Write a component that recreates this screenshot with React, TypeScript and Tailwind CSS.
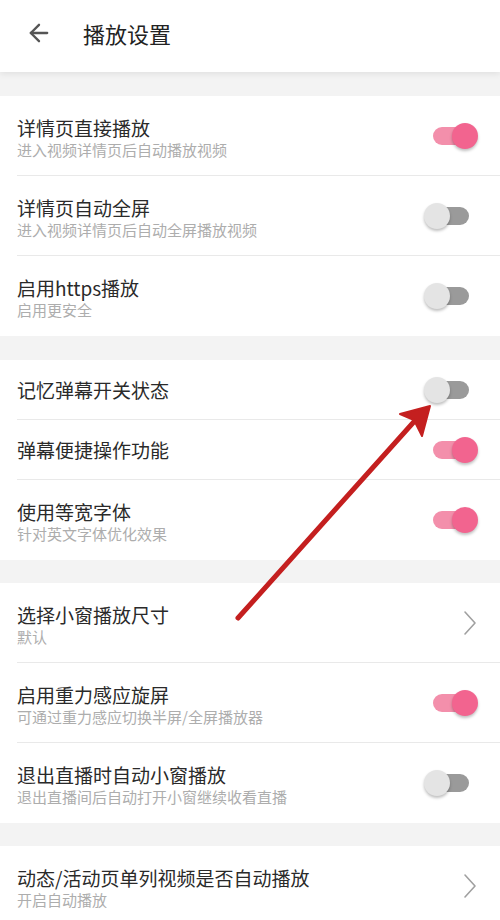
import React, { useState } from 'react';
import { ArrowLeft } from 'lucide-react';

type Item = {
  title: string;
  sub?: string;
  kind: 'toggle' | 'link';
  on?: boolean;
};

const SECTIONS: { gap: string; items: Item[] }[] = [
  {
    gap: 'h-[24px]',
    items: [
      { title: '详情页直接播放', sub: '进入视频详情页后自动播放视频', kind: 'toggle', on: true },
      { title: '详情页自动全屏', sub: '进入视频详情页后自动全屏播放视频', kind: 'toggle', on: false },
      { title: '启用https播放', sub: '启用更安全', kind: 'toggle', on: false },
    ],
  },
  {
    gap: 'h-[24px]',
    items: [
      { title: '记忆弹幕开关状态', kind: 'toggle', on: false },
      { title: '弹幕便捷操作功能', kind: 'toggle', on: true },
      { title: '使用等宽字体', sub: '针对英文字体优化效果', kind: 'toggle', on: true },
    ],
  },
  {
    gap: 'h-[23px]',
    items: [
      { title: '选择小窗播放尺寸', sub: '默认', kind: 'link' },
      { title: '启用重力感应旋屏', sub: '可通过重力感应切换半屏/全屏播放器', kind: 'toggle', on: true },
      { title: '退出直播时自动小窗播放', sub: '退出直播间后自动打开小窗继续收看直播', kind: 'toggle', on: false },
    ],
  },
  {
    gap: 'h-[23px]',
    items: [{ title: '动态/活动页单列视频是否自动播放', sub: '开启自动播放', kind: 'link' }],
  },
];

const Toggle: React.FC<{ on: boolean; onClick: () => void }> = ({ on, onClick }) => (
  <button onClick={onClick} className="relative w-[54px] h-[28px] shrink-0">
    <span
      className={`absolute left-[9px] top-[5px] w-[36px] h-[18px] rounded-full ${on ? 'bg-[#f38fab]' : 'bg-[#9a9a9a]'}`}
    />
    <span
      className={`absolute top-[1px] w-[26px] h-[26px] rounded-full shadow-[0_2px_3px_rgba(0,0,0,0.25)] ${
        on ? 'right-0 bg-[#f2648f]' : 'left-0 bg-[#e4e4e4]'
      }`}
    />
  </button>
);

const Chevron = () => (
  <svg width="14" height="26" viewBox="0 0 14 26" className="shrink-0 mr-[1px]">
    <polyline points="2,2 12,13 2,24" fill="none" stroke="#a0a0a0" strokeWidth="1.6" strokeLinecap="round" strokeLinejoin="round" />
  </svg>
);

const Row: React.FC<{ item: Item; last: boolean }> = ({ item, last }) => {
  const [on, setOn] = useState(!!item.on);
  return (
    <div className="relative flex items-center bg-white pl-[17px] pr-[22px]">
      <div className={`flex-1 flex flex-col ${item.sub ? 'pt-[20px] pb-[16px]' : 'py-[18px]'}`}>
        <span className="text-[19px] leading-[24px] text-[#2a2a2a]">{item.title}</span>
        {item.sub && <span className="text-[15px] leading-[20px] text-[#adadad]">{item.sub}</span>}
      </div>
      {item.kind === 'toggle' ? <Toggle on={on} onClick={() => setOn(!on)} /> : <Chevron />}
      {!last && <div className="absolute left-[17px] right-0 bottom-0 h-px bg-[#e9e9e9]" />}
    </div>
  );
};

export default function App() {
  return (
    <div
      className="relative w-[500px] h-[920px] overflow-hidden bg-[#f3f3f3]"
      style={{ fontFamily: '"Noto Sans CJK SC", "Noto Sans", sans-serif' }}
    >
      <header className="relative z-10 h-[72px] bg-white flex items-center pb-[6px] shadow-[0_2px_6px_rgba(0,0,0,0.08)]">
        <ArrowLeft className="ml-[25px] w-[28px] h-[28px] text-[#555]" strokeWidth={2} />
        <h1 className="ml-[30px] text-[22px] leading-[28px] text-[#222]">播放设置</h1>
      </header>

      {SECTIONS.map((s, i) => (
        <div key={i}>
          <div className={s.gap} />
          <div className="bg-white">
            {s.items.map((it, j) => (
              <Row key={it.title} item={it} last={j === s.items.length - 1} />
            ))}
          </div>
        </div>
      ))}

      <svg className="absolute inset-0 pointer-events-none z-20" width="500" height="920" viewBox="0 0 500 920">
        <line x1="238" y1="618" x2="420" y2="415" stroke="#c41f1f" strokeWidth="5" strokeLinecap="round" />
        <path d="M430 406 L400 414 L414 420 L422 436 Z" fill="#c41f1f" stroke="#c41f1f" strokeWidth="2" strokeLinejoin="round" />
      </svg>
    </div>
  );
}
